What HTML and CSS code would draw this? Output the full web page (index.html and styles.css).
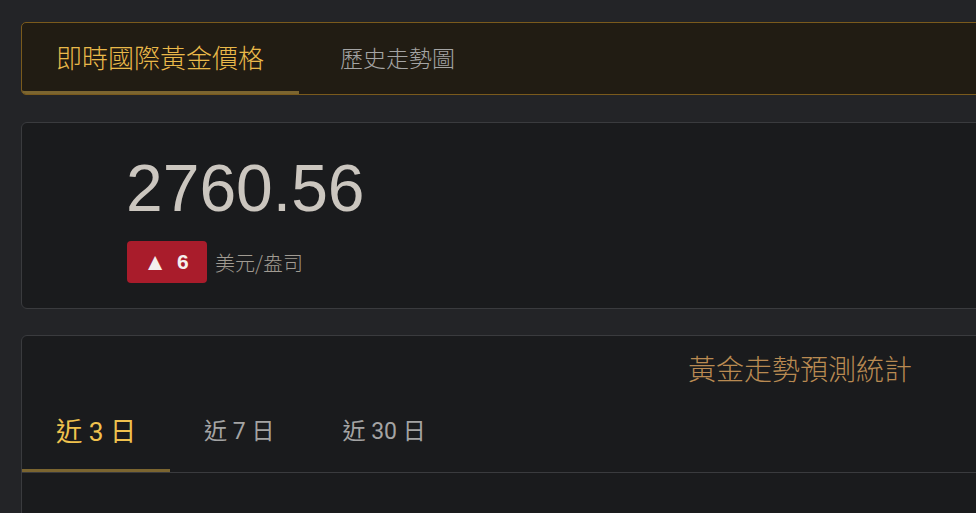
FILE: index.html
```html
<!DOCTYPE html>
<html lang="zh-TW">
<head>
    <meta charset="UTF-8">
    <meta name="viewport" content="width=device-width, initial-scale=1.0">
    <title>即時國際黃金價格</title>
    <link rel="stylesheet" href="styles.css">
</head>
<body>
    <div class="page">
        <div class="top-tabs">
            <div class="top-tab active">即時國際黃金價格</div>
            <div class="top-tab">歷史走勢圖</div>
        </div>

        <div class="card price-card">
            <div class="price">2760.56</div>
            <div class="price-info">
                <span class="change-badge"><i>▲</i> <b>6</b></span>
                <span class="unit">美元/盎司</span>
            </div>
        </div>

        <div class="card stats-card">
            <h2 class="stats-title">黃金走勢預測統計</h2>
            <div class="range-tabs">
                <div class="range-tab active">近 3 日</div>
                <div class="range-tab">近 7 日</div>
                <div class="range-tab">近 30 日</div>
            </div>
            <div class="stats-body"></div>
        </div>
    </div>
</body>
</html>
```

FILE: styles.css
```css
body {
    margin: 0;
    background-color: #232427;
    font-family: "Liberation Sans", "Noto Sans CJK TC", sans-serif;
    overflow: hidden;
}

.page {
    width: 1558px;
    margin: 22px 21px 0;
}

.top-tabs {
    display: flex;
    background-color: #211c13;
    border: 1px solid #7a5a1c;
    border-radius: 5px;
}

.top-tab {
    padding: 0 35px 0 34px;
    line-height: 68px;
    font-size: 26px;
    font-weight: 300;
    color: #a4a4a4;
    border-bottom: 3px solid transparent;
    font-family: "Noto Sans CJK TC", sans-serif;
}

.top-tab + .top-tab {
    padding-left: 41px;
    font-size: 23px;
}

.top-tab.active {
    color: #eab94a;
    border-bottom-color: #7b6530;
    border-bottom-left-radius: 4px;
}

.card {
    background-color: #1a1b1d;
    border: 1px solid #3a3b3e;
    border-radius: 6px;
    margin-top: 27px;
}

.card + .card {
    margin-top: 26px;
}

.price-card {
    padding: 32px 0 25px 104px;
}

.price {
    font-size: 66px;
    line-height: 1;
    color: #cbc6bf;
}

.price-info {
    display: flex;
    align-items: center;
    margin-top: 20px;
}

.change-badge {
    display: inline-flex;
    align-items: center;
    justify-content: center;
    gap: 6px;
    width: 80px;
    height: 42px;
    margin-left: 1px;
    background-color: #a91c2b;
    border-radius: 4px;
    color: #f4f0ee;
    font-size: 20px;
    font-family: "Liberation Sans", sans-serif;
}

.change-badge i {
    font-style: normal;
    font-size: 24px;
    margin-left: -2px;
}

.change-badge b {
    margin-left: 4px;
    font-size: 21px;
}

.unit {
    margin-left: 8px;
    font-size: 20px;
    font-weight: 300;
    color: #a19b92;
    font-family: "Noto Sans CJK TC", sans-serif;
}

.stats-card {
    padding-top: 12px;
}

.stats-title {
    margin: 0;
    text-align: center;
    font-size: 28px;
    line-height: 40px;
    font-weight: 300;
    color: #b98a52;
    font-family: "Noto Sans CJK TC", sans-serif;
}

.range-tabs {
    display: flex;
    margin-top: 20px;
    border-bottom: 1px solid #3a3b3e;
}

.range-tab {
    padding: 0 34px 13px;
    line-height: 48px;
    font-size: 23px;
    color: #a4a4a4;
    border-bottom: 3px solid transparent;
    font-family: Roboto, "Noto Sans CJK TC", sans-serif;
}

.range-tab.active {
    font-size: 26.2px;
    color: #f0c24e;
    border-bottom-color: #7b6530;
}

.stats-body {
    height: 120px;
}
```
